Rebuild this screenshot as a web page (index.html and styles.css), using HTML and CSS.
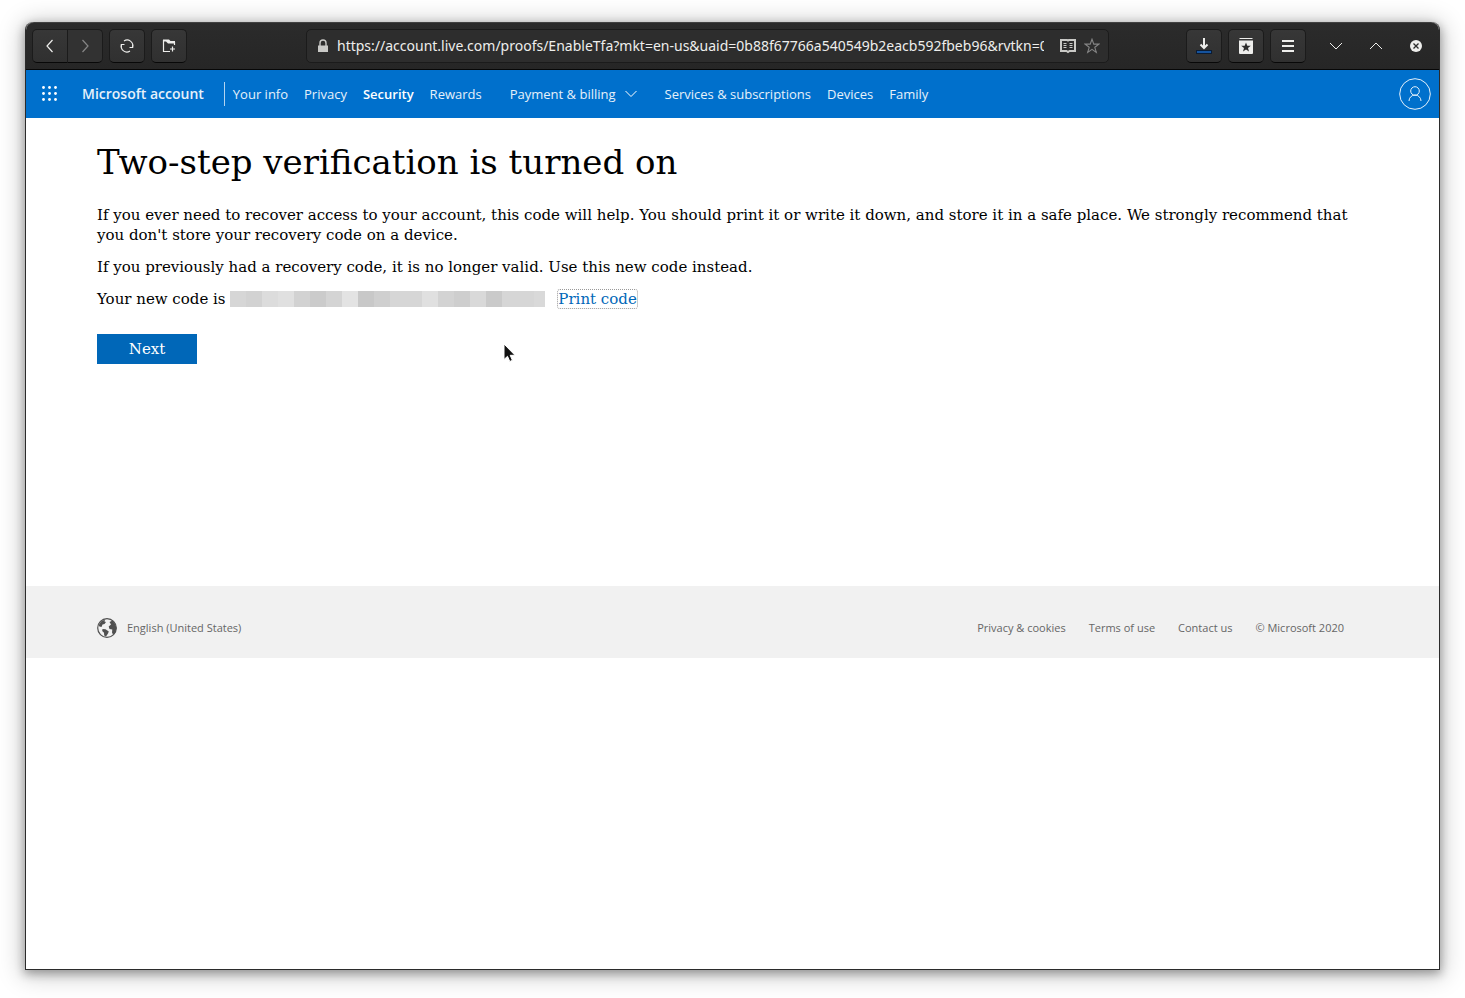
FILE: index.html
```html
<!DOCTYPE html>
<html lang="en">
<head>
<meta charset="utf-8">
<title>Two-step verification is turned on</title>
<link rel="stylesheet" href="styles.css">
</head>
<body>
<div class="window">
  <header class="toolbar">
    <div class="tools">
      <div class="pair">
        <button class="tool" type="button" aria-label="Back"><svg width="16" height="16" viewBox="0 0 16 16" fill="none" stroke="#eeeeec" stroke-width="1.2"><path d="M10.500 2 5 8l5.500 6"/></svg></button>
        <button class="tool dim" type="button" aria-label="Forward"><svg width="16" height="16" viewBox="0 0 16 16" fill="none" stroke="#868686" stroke-width="1.200"><path d="M5.500 2 11 8l-5.500 6"/></svg></button>
      </div>
      <button class="tool" type="button" aria-label="Reload"><svg width="16" height="16" viewBox="0 0 16 16" fill="none" stroke="#eeeeec" stroke-width="1.100"><path d="M5 3A5.600 5.600 0 0 1 13.500 9.300M11 13A5.600 5.600 0 0 1 2.500 6.700"/><path d="M10.500 9.500h3.200V6.500M5.500 6.500H2.300v3"/></svg></button>
      <button class="tool" type="button" aria-label="New tab"><svg width="16" height="16" viewBox="0 0 16 16"><path d="M9 13.500H2.500V2M13.500 4v3" fill="none" stroke="#eeeeec" stroke-width="1.200"/><path d="M2 1.500h6L9.500 3H14v2.500H7L5 3.500H2z" fill="#eeeeec"/><path d="M11.500 8.500v5M9 11h5" stroke="#eeeeec" stroke-width="1.200"/></svg></button>
    </div>
    <div class="address">
      <svg width="12" height="14" viewBox="0 0 12 14"><path d="M3 7V4a3 3 0 0 1 6 0v3" fill="none" stroke="#c9c9c6" stroke-width="1.400"/><path d="M1 6.500h10V13H1z" fill="#c9c9c6"/></svg>
      <input class="url" type="text" aria-label="Address" value="https://account.live.com/proofs/EnableTfa?mkt=en-us&amp;uaid=0b88f67766a540549b2eacb592fbeb96&amp;rvtkn=0">
      <svg width="16" height="16" viewBox="0 0 16 16"><path d="M1 2h6l1 .6L9 2h6v11H9.500L8 14l-1.500-1H1z" fill="none" stroke="#c9c9c6" stroke-width="2"/><path d="M3.500 5.500h3m-3 2h3m-3 2h3m3-4h3m-3 2h3m-3 2h3" stroke="#c9c9c6"/></svg>
      <svg width="16" height="16" viewBox="0 0 16 16"><path d="M8 1.200l1.800 4.900h5.100l-4.100 3.200 1.500 5.100L8 11.400l-4.300 3 1.500-5.100L1.100 6.100h5.100z" fill="none" stroke="#858585" stroke-width="1.100"/></svg>
    </div>
    <div class="tools tools-end">
      <button class="tool" type="button" aria-label="Downloads"><svg width="16" height="18" viewBox="0 0 16 18"><path d="M8 1v10M4.500 7.500 8 11l3.500-3.500" fill="none" stroke="#eeeeec" stroke-width="2"/><path d="M0 13h16v4H0z" fill="#0b1c33"/><path d="M1 14h14v2H1z" fill="#15539e"/></svg></button>
      <button class="tool" type="button" aria-label="Bookmarks"><svg width="16" height="16" viewBox="0 0 16 16"><path d="M1.500 0h13v1h-13zM1 2.500h14V15a1 1 0 0 1-1 1H2a1 1 0 0 1-1-1z" fill="#eeeeec"/><path d="M8 4.500l1.300 3.300h3.500L10 10l1 3.500-3-2-3 2L6 10 3.200 7.800h3.500z" fill="#2d2d2d"/></svg></button>
      <button class="tool" type="button" aria-label="Menu"><svg width="16" height="16" viewBox="0 0 16 16"><path d="M2 3h12M2 8h12M2 13h12" stroke="#eeeeec" stroke-width="2"/></svg></button>
      <div class="controls">
        <button class="control" type="button" aria-label="Minimize"><svg width="16" height="16" viewBox="0 0 16 16"><path d="M2 5l6 6 6-6" fill="none" stroke="#eeeeec" stroke-width="1"/></svg></button>
        <button class="control" type="button" aria-label="Maximize"><svg width="16" height="16" viewBox="0 0 16 16"><path d="M2 11l6-6 6 6" fill="none" stroke="#eeeeec" stroke-width="1"/></svg></button>
        <button class="control" type="button" aria-label="Close"><svg width="16" height="16" viewBox="0 0 16 16"><circle cx="8" cy="8" r="6" fill="#eeeeec"/><path d="M5.500 5.500l5 5m0-5-5 5" stroke="#2b2b2b" stroke-width="1.300"/></svg></button>
      </div>
    </div>
  </header>

  <nav class="nav" aria-label="Microsoft account">
    <button class="waffle" type="button" aria-label="All apps"><svg width="16" height="16" viewBox="0 0 16 16" fill="#fff"><circle cx="1.500" cy="1.500" r="1.400"/><circle cx="7.500" cy="1.500" r="1.400"/><circle cx="13.500" cy="1.500" r="1.400"/><circle cx="1.500" cy="7.500" r="1.400"/><circle cx="7.500" cy="7.500" r="1.400"/><circle cx="13.500" cy="7.500" r="1.400"/><circle cx="1.500" cy="13.500" r="1.400"/><circle cx="7.500" cy="13.500" r="1.400"/><circle cx="13.500" cy="13.500" r="1.400"/></svg></button>
    <a class="brand" href="#">Microsoft account</a>
    <div class="links">
      <a href="#">Your info</a>
      <a href="#">Privacy</a>
      <a class="current" href="#">Security</a>
      <a href="#">Rewards</a>
      <button class="dropdown" type="button">Payment &amp; billing<svg width="12" height="8" viewBox="0 0 12 8"><path d="M.5 1 6 6.500 11.500 1" fill="none" stroke="#fff" stroke-width="1"/></svg></button>
      <a href="#">Services &amp; subscriptions</a>
      <a href="#">Devices</a>
      <a href="#">Family</a>
    </div>
    <button class="avatar" type="button" aria-label="Profile"><svg width="32" height="32" viewBox="0 0 32 32" fill="none" stroke="#e6f1fa"><circle cx="16" cy="16" r="15.300"/><circle cx="16" cy="13" r="4.300"/><path d="M10 23a6 6 0 0 1 12 0"/></svg></button>
  </nav>

  <main class="content">
    <h1>Two-step verification is turned on</h1>
    <p>If you ever need to recover access to your account, this code will help. You should print it or write it down, and store it in a safe place. We strongly recommend that you don't store your recovery code on a device.</p>
    <p>If you previously had a recovery code, it is no longer valid. Use this new code instead.</p>
    <p class="code-row">Your new code is <span class="masked"></span><a class="print" href="#">Print code</a></p>
    <button class="next" type="button">Next</button>
    <svg class="cursor" width="13" height="20" viewBox="0 0 13 20"><path d="M1 1v15.500l3.500-3.200 2.300 5.200 2.600-1.200L7.200 12.300H12z" fill="#111" stroke="#fff" stroke-width="1"/></svg>
  </main>

  <footer class="footer">
    <a class="language" href="#"><svg width="20" height="20" viewBox="0 0 20 20"><circle cx="10" cy="10" r="9.300" fill="#f1f1f1" stroke="#505050" stroke-width="1.200"/><path d="M1.500 7.500 4 3.500 8 1.500 7.500 3.500 9 4 7.500 6 5.500 6.500 4.500 9 2.500 8.500zM5.500 11l3 .3 3.300 2.200-.8 2L9 18.500l-1.800-1L7 14.800 5.200 13zM12.500 4l3-1.500 3 4 1 4-1.500 4.500-2 1.500-1-2 .3-3L12.500 11l-.8-2.500L14 6.500z" fill="#505050"/></svg>English (United States)</a>
    <div class="legal">
      <a href="#">Privacy &amp; cookies</a>
      <a href="#">Terms of use</a>
      <a href="#">Contact us</a>
      <span>© Microsoft 2020</span>
    </div>
  </footer>
</div>
</body>
</html>
```
FILE: styles.css
```css
* { box-sizing: border-box; }

body {
  margin: 0;
  min-height: 100vh;
  padding: 22px 25px 28px;
  display: flex;
  background: #fff;
  color: #000;
  font: 15px/20px "DejaVu Serif", serif;
}

button, input { font: inherit; color: inherit; border: 0; padding: 0; background: none; }
a { color: inherit; text-decoration: none; }
svg { display: block; flex: none; }

.window {
  flex: 1;
  min-width: 0;
  display: flex;
  flex-direction: column;
  border: 1px solid #2b2b2b;
  border-top: 0;
  border-radius: 8px 8px 0 0;
  background: #fff;
  box-shadow: 0 3px 10px 1px rgba(0, 0, 0, 0.3), 0 3px 24px 3px rgba(0, 0, 0, 0.22);
}

.toolbar {
  height: 48px;
  padding: 0 3px 0 6px;
  display: grid;
  grid-template-columns: minmax(0, 274fr) minmax(0, 803fr) minmax(0, 327fr);
  align-items: center;
  border-top: 1px solid #414141;
  border-bottom: 1px solid #070707;
  border-radius: 8px 8px 0 0;
  background: linear-gradient(#2b2b2b, #262626);
}

.tools { display: flex; align-items: center; gap: 6px; }
.tools-end { justify-content: flex-end; }
.pair { display: flex; }

.tool {
  width: 36px;
  height: 34px;
  display: grid;
  place-items: center;
  border: 1px solid #1b1b1b;
  border-bottom-color: #080808;
  border-radius: 5px;
  background: linear-gradient(#373737, #303030);
}
.pair .tool:first-child { border-radius: 5px 0 0 5px; }
.pair .dim { margin-left: -1px; border-radius: 0 5px 5px 0; background: #323232; }

.controls { display: flex; margin-left: 4px; }
.control { width: 40px; height: 34px; display: grid; place-items: center; }

.address {
  height: 34px;
  padding: 0 8px 0 10px;
  display: flex;
  align-items: center;
  gap: 8px;
  border: 1px solid #1b1b1b;
  border-radius: 5px;
  background: #2d2d2d;
}
.url {
  flex: 1;
  min-width: 0;
  margin-right: 8px;
  color: #eeeeec;
  font: 14px/20px "Noto Sans", sans-serif;
}

.nav {
  height: 48px;
  padding: 0 8px 0 16px;
  display: flex;
  align-items: center;
  background: #0070cc;
  color: #e6f1fa;
  font: 13px/20px "Open Sans", sans-serif;
}
.brand {
  margin-left: 24px;
  padding-right: 20px;
  font-size: 14px;
  line-height: 24px;
  font-weight: 600;
  border-right: 1px solid #b3d4f0;
}
.links { flex: 1; display: flex; gap: 16px; padding-left: 8px; }
.current { font-weight: 600; color: #fff; }
.dropdown { display: flex; align-items: center; gap: 9px; margin: 0 12px; }

.content {
  position: relative;
  min-height: 468px;
  padding: 21px 71px;
}
h1 { margin: 0 0 20px; font-size: 34px; line-height: 46px; font-weight: 400; }
p { margin: 0 0 12px; }
.code-row { display: flex; align-items: center; white-space: pre; }
.masked {
  flex: 0 1 315px;
  height: 16px;
  margin-right: 13px;
  background: linear-gradient(90deg,
    #d6d6d6 16px, #d2d2d2 0 32px, #dcdcdc 0 48px, #e0e0e0 0 64px,
    #d2d2d2 0 80px, #cbcbcb 0 96px, #d4d4d4 0 112px, #e3e3e3 0 128px,
    #c8c8c8 0 144px, #cfcfcf 0 160px, #d6d6d6 0 192px, #e0e0e0 0 208px,
    #d3d3d3 0 224px, #cecece 0 240px, #d9d9d9 0 256px, #cacaca 0 272px,
    #d6d6d6 0 304px, #d9d9d9 0);
}
.print { color: #0067b8; outline: 1px dotted #999; border-radius: 2px; line-height: 18px; }
.next {
  width: 100px;
  height: 30px;
  margin-top: 13px;
  background: #0067b8;
  color: #fff;
}
.cursor { position: absolute; left: 477px; top: 225px; }

.footer {
  min-height: 72px;
  padding: 11px 95px 0 71px;
  display: flex;
  align-items: center;
  justify-content: space-between;
  background: #f1f1f1;
  color: #666;
  font: 11px/16px "Open Sans", sans-serif;
}
.language { display: flex; align-items: center; gap: 10px; }
.legal { display: flex; gap: 23px; }
```
